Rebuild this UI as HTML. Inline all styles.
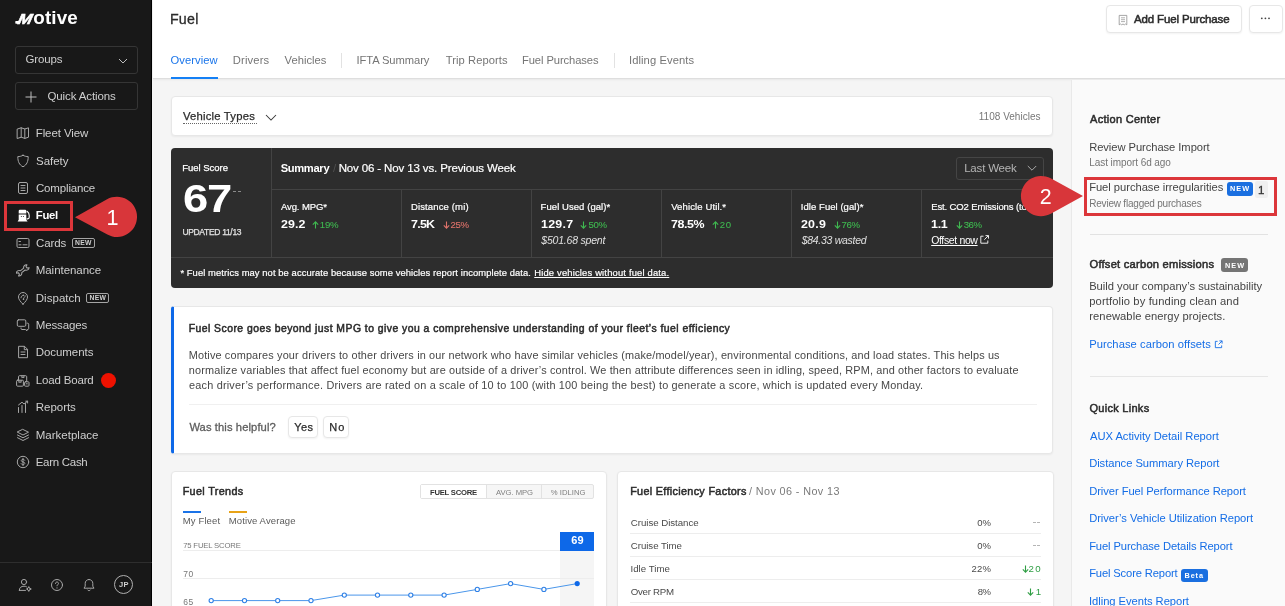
<!DOCTYPE html>
<html lang="en"><head>
<meta charset="utf-8">
<title>Fuel</title>
<style>
*{box-sizing:border-box;margin:0;padding:0}
html,body{width:1285px;height:606px;overflow:hidden;background:#f5f5f5;font-family:"Liberation Sans",sans-serif;color:#2b2b2b}
.abs{position:absolute}
.t{position:absolute;white-space:nowrap;line-height:1}
#side{position:absolute;left:0;top:0;width:152px;height:606px;background:#181818;border-right:1px solid #000}
#side .box{position:absolute;left:15px;width:123px;height:27px;border:1px solid #353535;border-radius:3px}
#side .mi{position:absolute;left:36.500px;font-size:11.500px;color:#cfcfcf;white-space:nowrap;line-height:14px}
#side svg.ic{position:absolute;left:16px;width:14px;height:14px;fill:none;stroke:#a6a6a6;stroke-width:1;stroke-linecap:round;stroke-linejoin:round}
.newb{position:absolute;font-size:6.800px;font-weight:bold;color:#cfcfcf;border:1px solid #a5a5a5;border-radius:2px;width:23px;height:10.500px;line-height:8.500px;text-align:center;letter-spacing:.2px}
#head{position:absolute;left:153px;top:0;width:1132px;height:79px;background:#fff;border-bottom:1px solid #dedede;box-shadow:0 1px 2px rgba(0,0,0,.06)}
.tab{position:absolute;font-size:11.200px;color:#757575;white-space:nowrap;line-height:14px}
.card{position:absolute;background:#fff;border:1px solid #e7e7e7;border-radius:4px;box-shadow:0 1px 2px rgba(0,0,0,.05)}
#right{position:absolute;left:1071px;top:80px;width:214px;height:526px;background:#fafafa;border-left:1px solid #e9e9e9}
.lnk{position:absolute;left:1089.500px;font-size:11.200px;color:#146de6;white-space:nowrap;line-height:14px}
.hd{left:1089.500px;font-size:11px;line-height:14px;color:#2b2b2b;-webkit-text-stroke:.5px #2b2b2b}
.rb{left:1089.500px;font-size:11.200px;line-height:14px;color:#444}
.rs{left:1089.500px;font-size:10px;line-height:12px;color:#757575}
.dark{position:absolute;left:171px;top:148px;width:882px;height:140px;background:#2d2d2d;border-radius:4px}
.dark .t{color:#fff}
.g{color:#3fb950;-webkit-text-stroke:.1px #3fb950}.r{color:#e0736b;-webkit-text-stroke:.1px #e0736b}

.d{color:#fff}
.ml{font-size:9.500px;line-height:12px;-webkit-text-stroke:.2px #fff}
.mv{font-size:11px;line-height:14px;font-weight:bold}
.mc{font-size:9.600px;line-height:12px}
.ar{position:absolute;top:221px;width:7px;height:8px;fill:none;stroke-width:1.1}
.gs{stroke:#3fb950}.rs2{stroke:#e0736b}
.ms{font-size:10.500px;line-height:12px;font-style:italic;color:#e0e0e0 !important}
.bd{left:189px;font-size:10.900px;line-height:14px;color:#474747}
.fr{font-size:9.700px;line-height:12px;color:#4a4a4a}
</style>
</head>
<body>
<div id="wrap" style="position:absolute;left:0;top:0;width:1285px;height:606px;overflow:hidden;will-change:transform">
<!-- SIDEBAR -->
<div id="side">
  <svg class="abs" style="left:12px;top:6px" width="70" height="22" viewBox="0 0 70 22" aria-label="Motive" font-family="Liberation Sans, sans-serif" font-weight="bold" fill="#fff"><text transform="translate(4.300,17.700) skewX(-24) scale(1.16,1)" font-size="14.600" stroke="#fff" stroke-width="0.5">M</text><rect x="3.300" y="15.100" width="4.500" height="2.600" rx="0.600"></rect><text x="21.25" y="17.700" font-size="18.88" style="letter-spacing: 0.14px;">otive</text></svg>
  <div class="box" style="top:46px;height:28px"></div>
  <div class="mi" style="left: 25.38px; letter-spacing: -0.12px; top: 52px;">Groups</div>
  <svg class="abs" style="left:117.500px;top:58px" width="10" height="7" viewBox="0 0 10 7" fill="none" stroke="#bdbdbd" stroke-width="1"><path d="M1 1l4 4 4-4"></path></svg>
  <div class="box" style="top:82px;height:28px"></div>
  <svg class="abs" style="left:25px;top:91.200px" width="12" height="12" viewBox="0 0 12 12" stroke="#bdbdbd" stroke-width="1"><path d="M6 0.5v11M0.5 6h11"></path></svg>
  <div class="mi" style="left: 47.5px; letter-spacing: -0.11px; top: 89px;">Quick Actions</div>

  <svg class="ic" style="top:126.1px" viewBox="0 0 14 14"><path d="M1.5 3l3.7-1.2 3.6 1.2 3.7-1.2v9.4l-3.7 1.2-3.6-1.2-3.7 1.2zM5.2 1.8v9.4M8.8 3v9.4"></path></svg>
  <div class="mi" style="letter-spacing: -0.09px; left: 35.73px; top: 126px;">Fleet View</div>
  <svg class="ic" style="top:153.5px" viewBox="0 0 14 14"><path d="M7 1.3c1.8 1 3.5 1.3 5.2 1.3 0 5-1.4 8.2-5.2 10.2C3.200 10.800 1.800 7.600 1.800 2.600 3.500 2.600 5.200 2.300 7 1.300z"></path></svg>
  <div class="mi" style="letter-spacing: -0.06px; left: 36.1px; top: 154px;">Safety</div>
  <svg class="ic" style="top:180.9px" viewBox="0 0 14 14"><rect x="2.500" y="1.500" width="9" height="11" rx="1.500"></rect><path d="M5 4.500h4M5 7h4M5 9.500h4"></path></svg>
  <div class="mi" style="letter-spacing: -0.16px; left: 35.98px; top: 181px;">Compliance</div>
  <svg class="ic" style="top:208.3px;fill:#fff;stroke:none" viewBox="0 0 14 14"><path d="M2.700 5.500V3a1.200 1.200 0 0 1 1.200-1.200h5.200a1.200 1.200 0 0 1 1.200 1.200v2.500z"></path><path d="M2.700 6.400h7.600v5.400l1.300 1.600h-10l1.100-1.600z"></path><circle cx="5.300" cy="8.500" r="0.500" fill="#181818"></circle><circle cx="7.400" cy="8.500" r="0.500" fill="#181818"></circle><path d="M11 3.300c1.500 1 2.200 2.500 2.200 4v2c0 1-.6 1.600-1.400 1.600h-.8" fill="none" stroke="#fff" stroke-width="1.100"></path></svg>
  <div class="mi" style="color: rgb(255, 255, 255); font-weight: bold; font-size: 11.33px; letter-spacing: -0.32px; left: 35.85px; top: 208px;">Fuel</div>
  <svg class="ic" style="top:235.7px" viewBox="0 0 14 14"><rect x="1" y="2.500" width="12" height="9" rx="1.300"></rect><path d="M3 5.500h1.500M3 8.800h2M7 8.800h4"></path></svg>
  <div class="mi" style="letter-spacing: -0.11px; left: 35.98px; top: 236px;">Cards</div><div class="newb" style="left:71.800px;top:237.800px">NEW</div>
  <svg class="ic" style="top:263.1px" viewBox="0 0 14 14"><path transform="translate(6.700,7.400) rotate(-38) scale(1.05)" stroke-width="1" d="M-2.040 -1.100L2.040 -1.100A2.600 2.600 0 0 1 6.390 -1.670L4.700 -.9V.9L6.390 1.670A2.600 2.600 0 0 1 2.040 1.100L-2.040 1.100A2.600 2.600 0 0 1 -6.390 1.670L-4.700 .9V-.9L-6.390 -1.670A2.600 2.600 0 0 1 -2.040 -1.100Z"></path></svg>
  <div class="mi" style="letter-spacing: -0.04px; left: 35.73px; top: 263px;">Maintenance</div>
  <svg class="ic" style="top:290.5px" viewBox="0 0 14 14"><path d="M7 13.200c-2.600-2.700-4.500-4.800-4.500-7.200a4.500 4.500 0 0 1 9 0c0 2.400-1.900 4.500-4.500 7.200z"></path><path d="M5 6.800c0-1.500 1-2.300 2-2.300M9.200 4.700c.2 1.700-1.800 1.500-1.800 3.200" stroke-width="0.9"></path><circle cx="7.300" cy="4.300" r="0.700" fill="#a6a6a6" stroke="none"></circle><circle cx="7.500" cy="8.300" r="0.800" fill="#a6a6a6" stroke="none"></circle></svg>
  <div class="mi" style="letter-spacing: 0.04px; left: 35.73px; top: 291px;">Dispatch</div><div class="newb" style="left:86.300px;top:292.600px">NEW</div>
  <svg class="ic" style="top:317.9px" viewBox="0 0 14 14"><rect x="1.300" y="1.800" width="8.500" height="6.500" rx="1.200"></rect><path d="M11 5.200h.7c.6 0 1 .5 1 1v4.300c0 .6-.4 1-1 1h-.7v1.300l-1.600-1.300h-3.400c-.6 0-1-.4-1-1v-.5"></path></svg>
  <div class="mi" style="letter-spacing: -0.12px; left: 35.73px; top: 318px;">Messages</div>
  <svg class="ic" style="top:345.3px" viewBox="0 0 14 14"><path d="M3 1.300h5.500l3 3v8.400h-8.500zM8.300 1.500v3.200h3M5 7h4M5 9.500h4"></path></svg>
  <div class="mi" style="letter-spacing: -0.06px; left: 35.73px; top: 345px;">Documents</div>
  <svg class="ic" style="top:372.7px" viewBox="0 0 14 14"><path d="M2.500 7V3.700c0-.6.400-1 1-1h6.200c.6 0 1 .4 1 1v4.800"></path><rect x="0.600" y="7.200" width="6.800" height="6" rx="1"></rect><rect x="8.600" y="8.800" width="4.400" height="4.400" rx="0.800"></rect><path d="M2.900 7.400v2.100l1.100-.7 1.100.7V7.400M5.900 2.900v1.900l1-.6 1 .6V2.900M10.300 10.800h1"></path></svg>
  <div class="mi" style="letter-spacing: -0.16px; left: 35.73px; top: 373px;">Load Board</div>
  <div class="abs" style="left:100.700px;top:372.700px;width:15.600px;height:15.600px;border-radius:50%;background:#ee1100"></div>
  <svg class="ic" style="top:400.1px" viewBox="0 0 14 14"><path d="M2.500 12.500v-5M6 12.500v-7M9.500 12.500v-9M2.500 5l3.500-2.800 2 1.800 3.500-2.800M9.800 1.200h1.800v1.800"></path></svg>
  <div class="mi" style="letter-spacing: -0.02px; left: 35.73px; top: 400px;">Reports</div>
  <svg class="ic" style="top:427.5px" viewBox="0 0 14 14"><path d="M7 1.500l5.500 2.700-5.500 2.800-5.500-2.800zM1.500 7l5.500 2.800 5.500-2.800M1.500 9.700l5.500 2.800 5.500-2.800"></path></svg>
  <div class="mi" style="letter-spacing: 0.01px; left: 35.73px; top: 428px;">Marketplace</div>
  <svg class="ic" style="top:454.9px" viewBox="0 0 14 14"><circle cx="7" cy="7" r="5.700"></circle><path d="M8.700 5.200c-.4-.6-1-.8-1.700-.8-1 0-1.700.5-1.700 1.300 0 1.700 3.500.8 3.500 2.600 0 .8-.8 1.300-1.800 1.300-.8 0-1.500-.3-1.900-.9M7 3.300v7.400"></path></svg>
  <div class="mi" style="letter-spacing: -0.29px; left: 35.73px; top: 455px;">Earn Cash</div>

  <div class="abs" style="left:0;top:562px;width:152px;height:1px;background:#2e2e2e"></div>
  <svg class="ic" style="top:578px;left:18px" viewBox="0 0 14 14"><circle cx="6" cy="4" r="2.600"></circle><path d="M1.300 12.400c-.2-2.600 1.900-4.200 4.700-4.200 1 0 1.800.2 2.500.6M1.300 12.400h6.200"></path><circle cx="10.800" cy="11" r="1.500"></circle><path d="M10.800 8.700v.8M10.800 12.500v.8M8.500 11h.8M12.300 11h.8"></path></svg>
  <svg class="ic" style="top:578px;left:50px" viewBox="0 0 14 14"><circle cx="7" cy="7" r="5.500"></circle><path d="M5.500 5.500c0-.9.700-1.500 1.500-1.500s1.500.6 1.500 1.400c0 1.200-1.500 1.200-1.500 2.400M7 9.800v.3"></path></svg>
  <svg class="ic" style="top:578px;left:82px" viewBox="0 0 14 14"><path d="M7 1.500c-2.300 0-3.800 1.700-3.800 3.900v2.800l-1.200 2h10l-1.200-2v-2.800c0-2.200-1.500-3.900-3.800-3.900zM5.700 12c.3.500.8.700 1.300.7s1-.2 1.300-.7"></path></svg>
  <div class="abs" style="left:114px;top:575px;width:19px;height:19px;border:1.3px solid #b0b0b0;border-radius:50%"></div>
  <div class="t" style="left: 119.08px; font-size: 7.5px; line-height: 9px; font-weight: bold; color: rgb(208, 208, 208); letter-spacing: 0.25px; top: 580px;">JP</div>

  <!-- marker 1 -->
  <div class="abs" style="left:3.700px;top:201px;width:69.300px;height:29.700px;border:3px solid #dc363a"></div>
  <svg class="abs" style="left:0;top:190px" width="150" height="55" viewBox="0 190 150 55"><path d="M75 217.200 L107.06 199.26 A20.150 20.150 0 1 1 107.36 234.60 Z" fill="#d8363a"></path><text x="112.500" y="224.700" font-family="Liberation Sans, sans-serif" font-size="21.600" fill="#fff" text-anchor="middle">1</text></svg>
</div>

<!-- HEADER -->
<div id="head"></div>
<div class="t" style="left: 169.88px; font-size: 14.21px; line-height: 17px; color: rgb(43, 43, 43); -webkit-text-stroke: 0.3px rgb(43, 43, 43); letter-spacing: 0.29px; top: 11px;">Fuel</div>
<div class="tab" style="left: 170.5px; color: rgb(26, 117, 234); letter-spacing: 0.06px; top: 53px;">Overview</div>
<div class="abs" style="left:171px;top:76.500px;width:47px;height:2.500px;background:#1480f5"></div>
<div class="tab" style="left: 232.83px; letter-spacing: 0.14px; top: 53px;">Drivers</div>
<div class="tab" style="left: 284.58px; letter-spacing: 0.01px; top: 53px;">Vehicles</div>
<div class="abs" style="left:341px;top:53px;width:1px;height:15px;background:#e2e2e2"></div>
<div class="tab" style="left: 356.4px; letter-spacing: -0.07px; top: 53px;">IFTA Summary</div>
<div class="tab" style="left: 445.85px; letter-spacing: 0.05px; top: 53px;">Trip Reports</div>
<div class="tab" style="left: 521.92px; letter-spacing: -0.08px; top: 53px;">Fuel Purchases</div>
<div class="abs" style="left:613.500px;top:53px;width:1px;height:15px;background:#e2e2e2"></div>
<div class="tab" style="left: 629px; letter-spacing: 0.08px; top: 53px;">Idling Events</div>

<div class="card" style="left:1106px;top:5px;width:136px;height:28px"></div>
<svg class="abs" style="left:1117.500px;top:13.500px" width="10" height="12" viewBox="0 0 10 12" fill="none" stroke="#909090" stroke-width="0.8"><path d="M1.200 1.400h7.600v9.400l-1.300-.8-1.200.8-1.300-.8-1.300.8-1.200-.8-1.300.8z"></path><path d="M3 3.800h4M3 5.700h4M3 7.600h4" stroke-width="0.700"></path></svg>
<div class="t" style="left: 1134px; font-size: 11.5px; line-height: 14px; color: rgb(43, 43, 43); -webkit-text-stroke: 0.5px rgb(43, 43, 43); letter-spacing: -0.14px; top: 12px;">Add Fuel Purchase</div>
<div class="card" style="left:1249px;top:5px;width:33.500px;height:28px"></div>
<svg class="abs" style="left:1260px;top:17px" width="11" height="3" viewBox="0 0 11 3" fill="#444"><circle cx="1.800" cy="1.300" r="0.900"></circle><circle cx="5.400" cy="1.300" r="0.900"></circle><circle cx="9" cy="1.300" r="0.900"></circle></svg>

<!-- RIGHT PANEL -->
<div id="right"></div>
<div class="t hd" style="letter-spacing: 0.29px; left: 1090px; top: 112px;">Action Center</div>
<div class="t rb" style="letter-spacing: -0.06px; left: 1089.13px; top: 140px;">Review Purchase Import</div>
<div class="t rs" style="letter-spacing: -0.07px; left: 1089.25px; top: 157px;">Last import 6d ago</div>
<div class="t rb" style="letter-spacing: -0.03px; left: 1089.13px; top: 180px;">Fuel purchase irregularities</div>
<div class="abs" style="left:1226.500px;top:181.500px;width:26.500px;height:14px;border-radius:3px;background:#1a6fe0"></div>
<div class="t" style="left: 1230px; font-size: 7.3px; line-height: 9px; font-weight: bold; color: rgb(255, 255, 255); letter-spacing: 1px; top: 184px;">NEW</div>
<div class="abs" style="left:1255px;top:181px;width:13px;height:17px;border-radius:2px;background:#efefef"></div>
<div class="t" style="left: 1258px; font-size: 11.5px; line-height: 13px; color: rgb(51, 51, 51); -webkit-text-stroke: 0.3px rgb(51, 51, 51); top: 184px;">1</div>
<div class="t rs" style="letter-spacing: -0.21px; left: 1089.25px; top: 198px;">Review flagged purchases</div>
<div class="abs" style="left:1090px;top:234px;width:178px;height:1px;background:#e2e2e2"></div>
<div class="t hd" style="font-size: 11.17px; letter-spacing: 0.23px; left: 1089.5px; top: 257px;">Offset carbon emissions</div>
<div class="abs" style="left:1221px;top:258px;width:27px;height:13.500px;border-radius:3px;background:#757575"></div>
<div class="t" style="left: 1225px; font-size: 7.3px; line-height: 9px; font-weight: bold; color: rgb(255, 255, 255); letter-spacing: 1px; top: 261px;">NEW</div>
<div class="t rb" style="letter-spacing: -0.01px; left: 1089.13px; top: 279px;">Build your company’s sustainability</div>
<div class="t rb" style="letter-spacing: 0.12px; left: 1089.25px; top: 294px;">portfolio by funding clean and</div>
<div class="t rb" style="letter-spacing: 0.07px; left: 1089.25px; top: 309px;">renewable energy projects.</div>
<div class="lnk" style="letter-spacing: 0.06px; left: 1089.13px; top: 337px;">Purchase carbon offsets</div>
<svg class="abs" style="left:1213.500px;top:339.500px" width="9" height="9" viewBox="0 0 10 10" fill="none" stroke="#146de6" stroke-width="1"><path d="M4 1.500H1.500v7h7V6M6 1h3v3M9 1L5 5"></path></svg>
<div class="abs" style="left:1090px;top:376px;width:178px;height:1px;background:#e6e6e6"></div>
<div class="t hd" style="letter-spacing: 0.28px; left: 1089.5px; top: 401px;">Quick Links</div>
<div class="lnk" style="letter-spacing: -0.02px; left: 1090px; top: 429px;">AUX Activity Detail Report</div>
<div class="lnk" style="letter-spacing: -0.04px; left: 1089.13px; top: 456px;">Distance Summary Report</div>
<div class="lnk" style="letter-spacing: -0.06px; left: 1089.13px; top: 484px;">Driver Fuel Performance Report</div>
<div class="lnk" style="letter-spacing: -0.05px; left: 1089.13px; top: 511px;">Driver’s Vehicle Utilization Report</div>
<div class="lnk" style="letter-spacing: -0.1px; left: 1089.13px; top: 539px;">Fuel Purchase Details Report</div>
<div class="lnk" style="letter-spacing: -0.14px; left: 1089.13px; top: 566px;">Fuel Score Report</div>
<div class="abs" style="left:1181px;top:568.500px;width:26.500px;height:13px;border-radius:3px;background:#1a6fe0"></div>
<div class="t" style="left: 1184.5px; font-size: 7.3px; line-height: 9px; font-weight: bold; color: rgb(255, 255, 255); letter-spacing: 0.88px; top: 571px;">Beta</div>
<div class="lnk" style="letter-spacing: -0.04px; left: 1089px; top: 594px;">Idling Events Report</div>

<!-- MAIN -->
<div class="card" style="left:171px;top:96px;width:882px;height:40px"></div>
<div class="t" style="left: 182.88px; font-size: 11.3px; line-height: 14px; color: rgb(43, 43, 43); -webkit-text-stroke: 0.25px rgb(43, 43, 43); letter-spacing: 0.2px; top: 109px;">Vehicle Types</div>
<div class="abs" style="left:183px;top:122.500px;width:74px;height:0;border-top:1px dotted #666"></div>
<svg class="abs" style="left:265px;top:113.500px" width="12" height="8" viewBox="0 0 12 8" fill="none" stroke="#3a3a3a" stroke-width="1.050"><path d="M1 1l5 5 5-5"></path></svg>
<div class="t" style="left: 978.75px; font-size: 10px; line-height: 12px; color: rgb(119, 119, 119); letter-spacing: 0.02px; top: 111px;">1108 Vehicles</div>

<!-- DARK SUMMARY CARD -->
<div class="dark"></div>
<div class="abs" style="left:271px;top:148px;width:1px;height:109px;background:#434343"></div>
<div class="abs" style="left:272px;top:189px;width:781px;height:1px;background:#434343"></div>
<div class="abs" style="left:171px;top:257px;width:882px;height:1px;background:#434343"></div>
<div class="abs" style="left:401px;top:189px;width:1px;height:68px;background:#434343"></div>
<div class="abs" style="left:531px;top:189px;width:1px;height:68px;background:#434343"></div>
<div class="abs" style="left:661px;top:189px;width:1px;height:68px;background:#434343"></div>
<div class="abs" style="left:791px;top:189px;width:1px;height:68px;background:#434343"></div>
<div class="abs" style="left:921px;top:189px;width:1px;height:68px;background:#434343"></div>

<div class="t d" style="left: 182.25px; font-size: 9.5px; line-height: 12px; -webkit-text-stroke: 0.25px rgb(255, 255, 255); letter-spacing: -0.03px; top: 162px;">Fuel Score</div>
<div class="t d" style="left: 183.3px; font-size: 39.5px; line-height: 40px; font-weight: bold; letter-spacing: -1.2px; transform: scaleX(1.15); transform-origin: 0px 0px; top: 178px;">67</div>
<div class="abs" style="left:233.300px;top:190.500px;width:3.200px;height:1px;background:#8a8a8a"></div><div class="abs" style="left:237.600px;top:190.500px;width:3.200px;height:1px;background:#8a8a8a"></div>
<div class="t d" style="left: 182.38px; font-size: 8.5px; line-height: 10px; color: rgb(226, 226, 226); -webkit-text-stroke: 0.25px rgb(226, 226, 226); letter-spacing: -0.32px; top: 227px;">UPDATED 11/13</div>

<div class="t d" style="left: 280.63px; font-size: 11.16px; line-height: 13px; font-weight: bold; letter-spacing: -0.31px; top: 162px;">Summary</div>
<div class="t d" style="left: 333px; font-size: 11.5px; line-height: 13px; color: rgb(80, 80, 80); top: 162px;">/</div>
<div class="t d" style="left: 338.63px; font-size: 11.5px; line-height: 13px; -webkit-text-stroke: 0.2px rgb(255, 255, 255); letter-spacing: -0.13px; top: 162px;">Nov 06 - Nov 13 vs. Previous Week</div>
<div class="abs" style="left:956px;top:156.500px;width:88px;height:23px;border:1px solid #454545;border-radius:3px"></div>
<div class="t d" style="left: 964.13px; font-size: 11.5px; line-height: 14px; color: rgb(180, 180, 180); letter-spacing: -0.18px; top: 161px;">Last Week</div>
<svg class="abs" style="left:1027px;top:165px" width="10" height="7" viewBox="0 0 10 7" fill="none" stroke="#ababab" stroke-width="1"><path d="M0.800 1l4.200 4.200 4.200-4.200"></path></svg>

<!-- metric columns -->
<div class="t d ml" style="left: 281px; letter-spacing: -0.12px; top: 201px;">Avg. MPG*</div>
<div class="t d mv" style="left: 280.58px; transform: scaleX(1.13); transform-origin: 0px 0px; letter-spacing: 0.03px; top: 217px;">29.2</div>
<svg class="ar gs" style="left:312px" viewBox="0 0 7 8"><path d="M3.500 7.500V1M0.800 3.600L3.500 0.900l2.700 2.700"></path></svg>
<div class="t mc g" style="left: 319.75px; letter-spacing: -0.16px; top: 219px;">19%</div>
<div class="t d ml" style="left: 410.95px; letter-spacing: 0.14px; top: 201px;">Distance (mi)</div>
<div class="t d mv" style="left: 411.14px; transform: scaleX(1.13); transform-origin: 0px 0px; letter-spacing: -0.64px; top: 217px;">7.5K</div>
<svg class="ar rs2" style="left:442.5px" viewBox="0 0 7 8"><path d="M3.500 0.500V7M0.800 4.400L3.500 7.100l2.700-2.700"></path></svg>
<div class="t mc r" style="left: 450.5px; letter-spacing: -0.29px; top: 219px;">25%</div>
<div class="t d ml" style="left: 540.55px; letter-spacing: 0.07px; top: 201px;">Fuel Used (gal)*</div>
<div class="t d mv" style="left: 540.59px; transform: scaleX(1.13); transform-origin: 0px 0px; letter-spacing: 0.24px; top: 217px;">129.7</div>
<svg class="ar gs" style="left:580.3px" viewBox="0 0 7 8"><path d="M3.500 0.500V7M0.800 4.400L3.500 7.100l2.700-2.700"></path></svg>
<div class="t mc g" style="left: 588.42px; letter-spacing: -0.35px; top: 219px;">50%</div>
<div class="t d ms" style="left: 541.3px; letter-spacing: -0.21px; top: 234px;">$501.68 spent</div>
<div class="t d ml" style="left: 671.18px; letter-spacing: 0.12px; top: 201px;">Vehicle Util.*</div>
<div class="t d mv" style="left: 670.73px; transform: scaleX(1.13); transform-origin: 0px 0px; letter-spacing: -0.38px; top: 217px;">78.5%</div>
<svg class="ar gs" style="left:712px" viewBox="0 0 7 8"><path d="M3.500 7.500V1M0.800 3.600L3.500 0.900l2.700 2.700"></path></svg>
<div class="t mc g" style="left: 719.8px; letter-spacing: 0.72px; top: 219px;">20</div>
<div class="t d ml" style="left: 800.83px; letter-spacing: 0.05px; top: 201px;">Idle Fuel (gal)*</div>
<div class="t d mv" style="left: 801.28px; transform: scaleX(1.13); transform-origin: 0px 0px; letter-spacing: 0.18px; top: 217px;">20.9</div>
<svg class="ar gs" style="left:834px" viewBox="0 0 7 8"><path d="M3.500 0.500V7M0.800 4.400L3.500 7.100l2.700-2.700"></path></svg>
<div class="t mc g" style="left: 841.5px; letter-spacing: -0.29px; top: 219px;">76%</div>
<div class="t d ms" style="left: 801.7px; letter-spacing: -0.28px; top: 234px;">$84.33 wasted</div>
<div class="abs" style="left:931px;top:198px;width:122px;height:16px;overflow:hidden"><div class="t d ml" style="left: 0.25px; letter-spacing: -0.13px; top: 3px;">Est. CO2 Emissions (tons)</div></div>
<div class="t d mv" style="left: 930.99px; transform: scaleX(1.13); transform-origin: 0px 0px; letter-spacing: -0.24px; top: 217px;">1.1</div>
<svg class="ar gs" style="left:955.5px" viewBox="0 0 7 8"><path d="M3.500 0.500V7M0.800 4.400L3.500 7.100l2.700-2.700"></path></svg>
<div class="t mc g" style="left: 963.63px; letter-spacing: -0.35px; top: 219px;">36%</div>
<div class="t d" style="left: 931.2px; font-size: 10.5px; line-height: 12px; text-decoration: underline 0.8px; text-underline-offset: 1px; letter-spacing: -0.36px; top: 234px;">Offset now</div>
<svg class="abs" style="left:980px;top:235px" width="9" height="9" viewBox="0 0 9 9" fill="none" stroke="#fff" stroke-width="0.9"><path d="M3.500 1.200H0.800v7h7V5.500M5.500 0.600h3v3M8.300 0.700L4.300 4.700"></path></svg>

<div class="t d" style="left: 180.38px; font-size: 9.4px; line-height: 12px; -webkit-text-stroke: 0.2px rgb(255, 255, 255); letter-spacing: 0.09px; top: 267px;">* Fuel metrics may not be accurate because some vehicles report incomplete data.</div>
<div class="t d" style="left: 534.25px; font-size: 9.4px; line-height: 12px; -webkit-text-stroke: 0.2px rgb(255, 255, 255); text-decoration: underline 0.8px; text-underline-offset: 1px; letter-spacing: 0.18px; top: 267px;">Hide vehicles without fuel data.</div>

<!-- INFO CARD -->
<div class="card" style="left:171px;top:306px;width:882px;height:148px;border-left:3px solid #0d68e8;border-radius:3px 4px 4px 3px"></div>
<div class="t" style="left: 188.63px; font-size: 10.4px; line-height: 13px; color: rgb(43, 43, 43); -webkit-text-stroke: 0.5px rgb(43, 43, 43); letter-spacing: 0.47px; top: 322px;">Fuel Score goes beyond just MPG to give you a comprehensive understanding of your fleet’s fuel efficiency</div>
<div class="t bd" style="letter-spacing: 0.15px; left: 188.73px; top: 348px;">Motive compares your drivers to other drivers in our network who have similar vehicles (make/model/year), environmental conditions, and load states. This helps us</div>
<div class="t bd" style="letter-spacing: 0.15px; left: 188.85px; top: 363px;">normalize variables that affect fuel economy but are outside of a driver’s control. We then attribute differences seen in idling, speed, RPM, and other factors to evaluate</div>
<div class="t bd" style="letter-spacing: 0.19px; left: 189.1px; top: 378px;">each driver’s performance. Drivers are rated on a scale of 10 to 100 (with 100 being the best) to generate a score, which is updated every Monday.</div>
<div class="abs" style="left:189px;top:404px;width:848px;height:1px;background:#f0f0f0"></div>
<div class="t" style="left: 189.38px; font-size: 11.2px; line-height: 14px; color: rgb(94, 94, 94); -webkit-text-stroke: 0.3px rgb(94, 94, 94); letter-spacing: 0.1px; top: 420px;">Was this helpful?</div>
<div class="card" style="left:287.500px;top:416px;width:30px;height:22px"></div>
<div class="t" style="left: 294.25px; font-size: 11px; line-height: 14px; color: rgb(43, 43, 43); -webkit-text-stroke: 0.25px rgb(43, 43, 43); letter-spacing: 0.38px; top: 420px;">Yes</div>
<div class="card" style="left:322.500px;top:416px;width:26px;height:22px"></div>
<div class="t" style="left: 329.13px; font-size: 11px; line-height: 14px; color: rgb(43, 43, 43); -webkit-text-stroke: 0.25px rgb(43, 43, 43); letter-spacing: 1.25px; top: 420px;">No</div>

<!-- FUEL TRENDS CARD -->
<div class="card" style="left:171px;top:471px;width:436px;height:150px"></div>
<div class="t" style="left: 182.63px; font-size: 10.8px; line-height: 13px; color: rgb(43, 43, 43); -webkit-text-stroke: 0.5px rgb(43, 43, 43); letter-spacing: 0.35px; top: 485px;">Fuel Trends</div>
<div class="abs" style="left:420px;top:484px;width:174px;height:15px;border:1px solid #e2e2e2;border-radius:2px;background:#f6f6f6"></div>
<div class="abs" style="left:421px;top:485px;width:65px;height:13px;background:#fff"></div>
<div class="abs" style="left:486px;top:485px;width:1px;height:13px;background:#e2e2e2"></div>
<div class="abs" style="left:541px;top:485px;width:1px;height:13px;background:#e2e2e2"></div>
<div class="t" style="left: 430px; font-size: 7.7px; line-height: 9px; font-weight: bold; color: rgb(51, 51, 51); letter-spacing: -0.26px; top: 488px;">FUEL SCORE</div>
<div class="t" style="left: 496px; font-size: 7.7px; line-height: 9px; color: rgb(128, 128, 128); letter-spacing: -0.05px; top: 488px;">AVG. MPG</div>
<div class="t" style="left: 550.75px; font-size: 7.7px; line-height: 9px; color: rgb(128, 128, 128); letter-spacing: 0.02px; top: 488px;">% IDLING</div>
<div class="abs" style="left:183px;top:511px;width:18px;height:2px;background:#1a73e8"></div>
<div class="abs" style="left:229px;top:511px;width:18px;height:2px;background:#e8a317"></div>
<div class="t" style="left: 182.75px; font-size: 9.5px; line-height: 12px; color: rgb(90, 90, 90); letter-spacing: 0.13px; top: 515px;">My Fleet</div>
<div class="t" style="left: 228.75px; font-size: 9.5px; line-height: 12px; color: rgb(90, 90, 90); letter-spacing: 0.11px; top: 515px;">Motive Average</div>
<div class="abs" style="left:560px;top:550px;width:34px;height:60px;background:#f5f5f5"></div>
<div class="abs" style="left:183px;top:550px;width:411px;height:1px;background:#ededed"></div>
<div class="abs" style="left:183px;top:578px;width:411px;height:1px;background:#ededed"></div>
<div class="t" style="left: 183.13px; font-size: 7.7px; line-height: 9px; color: rgb(119, 119, 119); letter-spacing: -0.15px; top: 541px;">75 FUEL SCORE</div>
<div class="t" style="left: 183.13px; font-size: 8.5px; line-height: 10px; color: rgb(119, 119, 119); letter-spacing: 0.55px; top: 569px;">70</div>
<div class="t" style="left: 183.13px; font-size: 8.5px; line-height: 10px; color: rgb(119, 119, 119); letter-spacing: 0.55px; top: 597px;">65</div>
<div class="abs" style="left:560px;top:532px;width:34px;height:18.500px;background:#0d68e8"></div>
<div class="t" style="left: 571.13px; font-size: 11px; line-height: 11px; font-weight: bold; color: rgb(255, 255, 255); letter-spacing: 0.2px; top: 535px;">69</div>
<svg class="abs" style="left:171px;top:472px" width="436" height="134" viewBox="171 472.600 436 134"><polyline points="211.200,601.200 244.500,601.200 277.700,601.200 311,601.200 344.300,595.700 377.500,595.700 410.800,595.700 444.100,595.700 477.300,590 510.600,584.200 543.900,590 577.200,584.200" fill="none" stroke="#4a96ea" stroke-width="1"></polyline><g fill="#fff" stroke="#2f80e6" stroke-width="1.1"><circle cx="211.200" cy="601.200" r="2.100"></circle><circle cx="244.500" cy="601.200" r="2.100"></circle><circle cx="277.700" cy="601.200" r="2.100"></circle><circle cx="311" cy="601.200" r="2.100"></circle><circle cx="344.300" cy="595.700" r="2.100"></circle><circle cx="377.500" cy="595.700" r="2.100"></circle><circle cx="410.800" cy="595.700" r="2.100"></circle><circle cx="444.100" cy="595.700" r="2.100"></circle><circle cx="477.300" cy="590" r="2.100"></circle><circle cx="510.600" cy="584.200" r="2.100"></circle><circle cx="543.900" cy="590" r="2.100"></circle></g><circle cx="577.200" cy="584.200" r="2.600" fill="#0d68e8"></circle></svg>

<!-- FUEL EFFICIENCY CARD -->
<div class="card" style="left:617px;top:471px;width:437px;height:150px"></div>
<div class="t" style="left: 630.13px; font-size: 10.8px; line-height: 13px; color: rgb(43, 43, 43); -webkit-text-stroke: 0.5px rgb(43, 43, 43); letter-spacing: 0.33px; top: 485px;">Fuel Efficiency Factors</div>
<div class="t" style="left: 749px; font-size: 10.8px; line-height: 13px; color: rgb(122, 122, 122); letter-spacing: 0.4px; top: 485px;">/ Nov 06 - Nov 13</div>
<div class="t fr" style="letter-spacing: -0.04px; left: 630.8px; top: 517px;">Cruise Distance</div>
<div class="t fr" style="letter-spacing: -0.05px; left: 630.8px; top: 540px;">Cruise Time</div>
<div class="t fr" style="letter-spacing: 0.03px; left: 630.42px; top: 563px;">Idle Time</div>
<div class="t fr" style="letter-spacing: -0.29px; left: 630.8px; top: 586px;">Over RPM</div>
<div class="abs" style="left:630px;top:533px;width:411px;height:1px;background:#ededed"></div>
<div class="abs" style="left:630px;top:556px;width:411px;height:1px;background:#ededed"></div>
<div class="abs" style="left:630px;top:579px;width:411px;height:1px;background:#ededed"></div>
<div class="abs" style="left:630px;top:602px;width:411px;height:1px;background:#ededed"></div>
<div class="t fr" style="font-size: 9.5px; letter-spacing: 0px; left: 977.13px; top: 517px;">0%</div>
<div class="t fr" style="font-size: 9.5px; letter-spacing: 0px; left: 977.13px; top: 540px;">0%</div>
<div class="t fr" style="font-size: 9.5px; letter-spacing: 0.19px; left: 971.5px; top: 563px;">22%</div>
<div class="t fr" style="font-size: 9.5px; letter-spacing: -0.5px; left: 977.63px; top: 586px;">8%</div>
<div class="abs" style="left:1033px;top:521.500px;width:3px;height:1px;background:#b5b5b5"></div><div class="abs" style="left:1037.300px;top:521.500px;width:3px;height:1px;background:#b5b5b5"></div>
<div class="abs" style="left:1033px;top:544.500px;width:3px;height:1px;background:#b5b5b5"></div><div class="abs" style="left:1037.300px;top:544.500px;width:3px;height:1px;background:#b5b5b5"></div>
<svg class="ar" style="left:1021.500px;top:564.600px;stroke:#2f9e44" viewBox="0 0 7 8"><path d="M3.500 0.500V7M0.800 4.400L3.500 7.100l2.700-2.700"></path></svg><div class="t fr" style="color: rgb(47, 158, 68); letter-spacing: 1.43px; left: 1028.5px; top: 563px;">20</div>
<svg class="ar" style="left:1026.800px;top:587.600px;stroke:#2f9e44" viewBox="0 0 7 8"><path d="M3.500 0.500V7M0.800 4.400L3.500 7.100l2.700-2.700"></path></svg><div class="t fr" style="color: rgb(47, 158, 68); letter-spacing: 0px; left: 1035.75px; top: 586px;">1</div>

<!-- marker 2 -->
<div class="abs" style="left:1084.300px;top:177.100px;width:193.100px;height:38.900px;border:3px solid #dc363a"></div>
<svg class="abs" style="left:1010px;top:170px" width="80" height="55" viewBox="1010 170 80 55"><path d="M1083 195.900 L1050.79 213.69 A20.150 20.150 0 1 1 1050.67 178.34 Z" fill="#d8363a"></path><text x="1045.600" y="204" font-family="Liberation Sans, sans-serif" font-size="21.400" fill="#fff" text-anchor="middle">2</text></svg>
</div>


</body></html>
